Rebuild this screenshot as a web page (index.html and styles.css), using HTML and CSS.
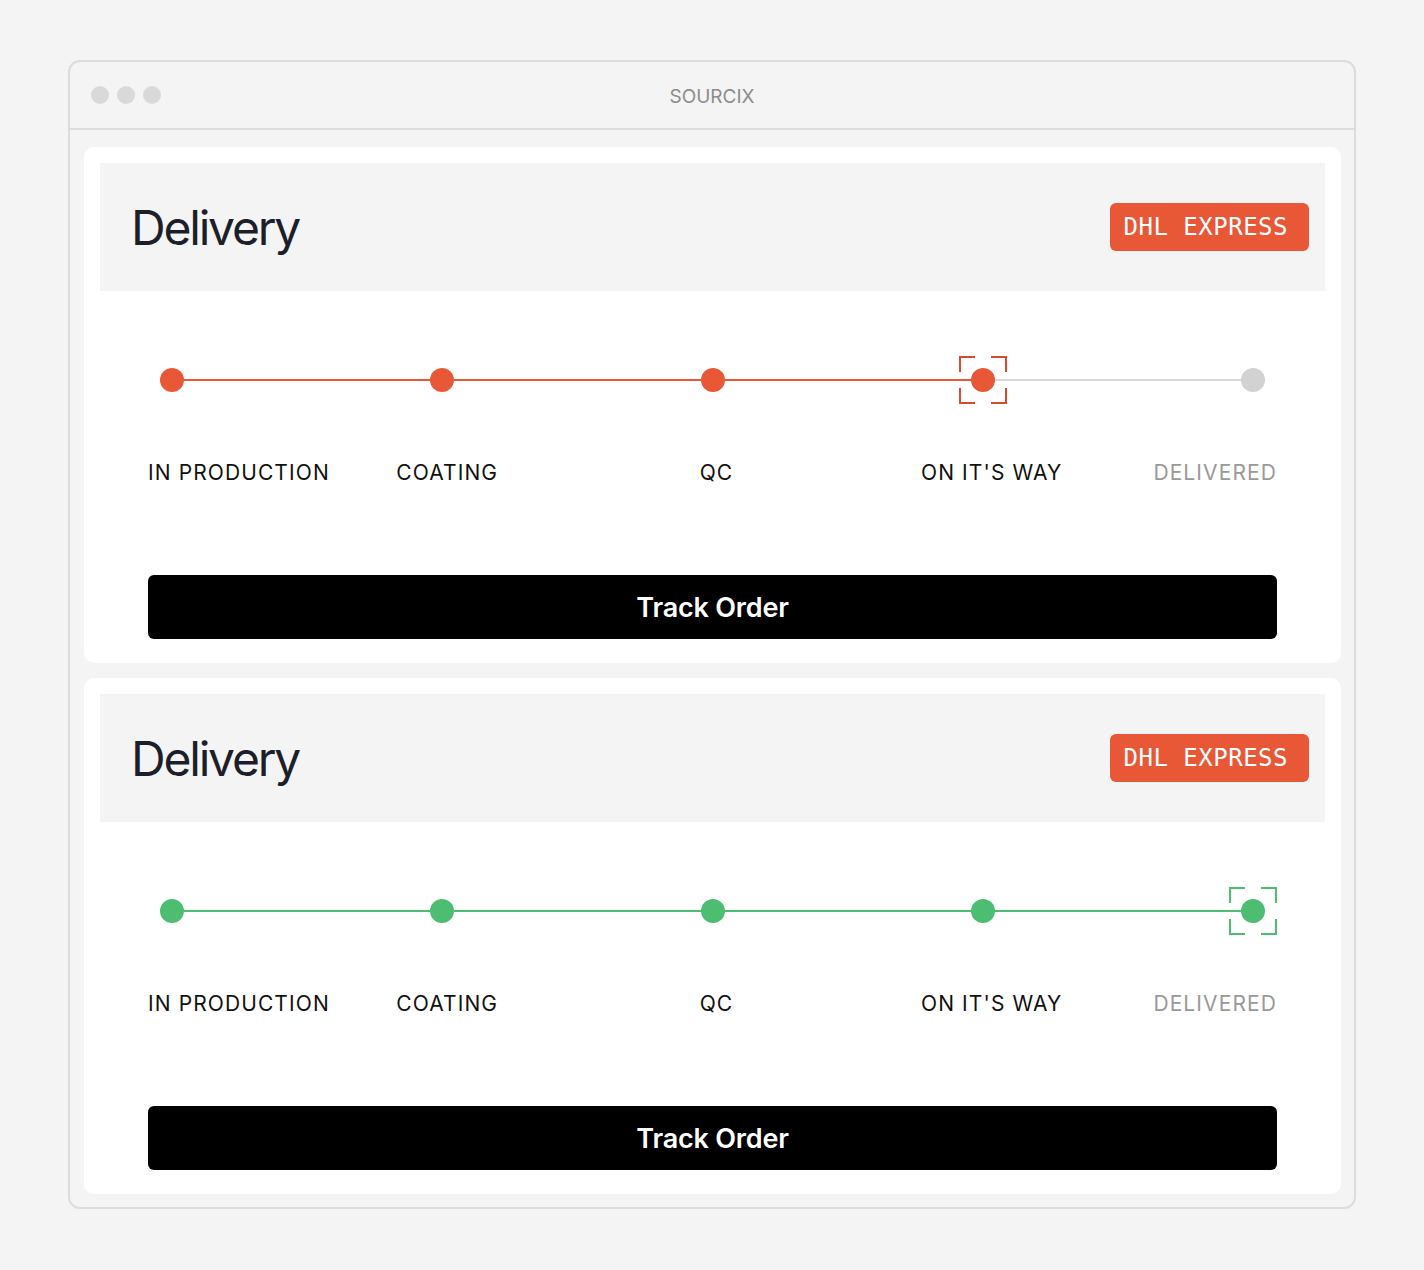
FILE: index.html
```html
<!DOCTYPE html>
<html lang="en">
<head>
  <meta charset="UTF-8">
  <meta name="viewport" content="width=device-width, initial-scale=1.0">
  <title>Sourcix - Delivery</title>
  <link rel="stylesheet" href="styles.css">
</head>
<body>
  <div class="window">
    <div class="window-bar">
      <div class="window-dots">
        <span></span><span></span><span></span>
      </div>
      <div class="window-title">SOURCIX</div>
      <div></div>
    </div>

    <div class="window-body">

      <!-- 订单 1：运输中 -->
      <section class="card">
        <div class="card-head">
          <h2>Delivery</h2>
          <span class="carrier">DHL EXPRESS</span>
        </div>
        <div class="timeline orange">
          <div class="track">
            <div class="stop done"><span class="dot"></span></div>
            <div class="seg done"></div>
            <div class="stop done"><span class="dot"></span></div>
            <div class="seg done"></div>
            <div class="stop done"><span class="dot"></span></div>
            <div class="seg done"></div>
            <div class="stop current">
              <svg class="frame" width="48" height="48" viewBox="0 0 48 48">
                <path d="M1 16V1h15M32 1h15v15M47 32v15H32M16 47H1V32" />
              </svg>
              <span class="dot"></span>
            </div>
            <div class="seg"></div>
            <div class="stop"><span class="dot"></span></div>
          </div>
          <div class="labels">
            <span>IN PRODUCTION</span>
            <span>COATING</span>
            <span>QC</span>
            <span>ON IT'S WAY</span>
            <span class="pending">DELIVERED</span>
          </div>
          <button class="track-btn">Track Order</button>
        </div>
      </section>

      <!-- 订单 2：已送达 -->
      <section class="card">
        <div class="card-head">
          <h2>Delivery</h2>
          <span class="carrier">DHL EXPRESS</span>
        </div>
        <div class="timeline green">
          <div class="track">
            <div class="stop done"><span class="dot"></span></div>
            <div class="seg done"></div>
            <div class="stop done"><span class="dot"></span></div>
            <div class="seg done"></div>
            <div class="stop done"><span class="dot"></span></div>
            <div class="seg done"></div>
            <div class="stop done"><span class="dot"></span></div>
            <div class="seg done"></div>
            <div class="stop current">
              <svg class="frame" width="48" height="48" viewBox="0 0 48 48">
                <path d="M1 16V1h15M32 1h15v15M47 32v15H32M16 47H1V32" />
              </svg>
              <span class="dot"></span>
            </div>
          </div>
          <div class="labels">
            <span>IN PRODUCTION</span>
            <span>COATING</span>
            <span>QC</span>
            <span>ON IT'S WAY</span>
            <span class="pending">DELIVERED</span>
          </div>
          <button class="track-btn">Track Order</button>
        </div>
      </section>

    </div>
  </div>
</body>
</html>
```

FILE: styles.css
```css
body {
  margin: 0;
  padding: 60px 0 62px;
  background-color: #f4f4f4;
  font-family: Inter, "Liberation Sans", Arial, sans-serif;
  color: #111;
}

.window {
  box-sizing: border-box;
  width: 1288px;
  margin: 0 auto;
  border: 2px solid #dcdcdc;
  border-radius: 12px;
  background-color: #f4f4f4;
}

.window-bar {
  display: grid;
  grid-template-columns: 1fr auto 1fr;
  align-items: center;
  height: 66px;
  padding: 0 21px;
  border-bottom: 2px solid #dcdcdc;
}

.window-dots {
  display: flex;
  gap: 8px;
}

.window-dots span {
  width: 18px;
  height: 18px;
  border-radius: 50%;
  background-color: #d9d9d9;
}

.window-title {
  font-size: 19px;
  color: #8c8c8c;
  padding-top: 2px;
}

.window-body {
  display: flex;
  flex-direction: column;
  gap: 15px;
  padding: 17px 13px 13px 14px;
}

.card {
  background-color: #fff;
  border-radius: 10px;
  padding: 16px;
}

.card-head {
  display: flex;
  justify-content: space-between;
  align-items: center;
  height: 128px;
  padding: 0 16px 0 31px;
  background-color: #f4f4f4;
}

.card-head h2 {
  margin: 0;
  font-size: 48px;
  font-weight: 400;
  letter-spacing: -2.2px;
  color: #1c1f2a;
}

.carrier {
  display: flex;
  align-items: center;
  height: 48px;
  padding: 0 21px 0 14px;
  border-radius: 6px;
  background-color: #e85736;
  color: #fff;
  font-family: "DejaVu Sans Mono", "Liberation Mono", monospace;
  font-size: 24px;
  letter-spacing: 0.5px;
}

/* 进度条 */
.timeline {
  padding: 65px 48px 8px;
  --on: #e85736;
  --frame: #d94a2c;
}

.timeline.green {
  --on: #4dbd72;
  --frame: #4dbd72;
}

.track {
  display: flex;
  align-items: center;
}

.stop {
  position: relative;
  z-index: 1;
  display: flex;
  align-items: center;
  justify-content: center;
  width: 48px;
  height: 48px;
  flex: none;
}

.dot {
  width: 24px;
  height: 24px;
  border-radius: 50%;
  background-color: #d2d2d2;
}

.stop.done .dot,
.stop.current .dot {
  background-color: var(--on);
}

.frame {
  position: absolute;
  top: 0;
  left: 0;
  fill: none;
  stroke: var(--frame);
  stroke-width: 2;
}

.seg {
  flex: 1;
  height: 2px;
  margin: 0 -12px;
  background-color: #d9d9d9;
}

.seg.done {
  background-color: var(--on);
}

.labels {
  display: grid;
  grid-template-columns: minmax(0, 159fr) repeat(3, minmax(0, 270fr)) minmax(0, 159fr);
  margin-top: 57px;
  font-size: 21px;
  letter-spacing: 1.1px;
  line-height: 24px;
  white-space: nowrap;
}

.labels span {
  justify-self: center;
}

.labels span:nth-child(2) {
  padding-left: 10px;
}

.labels span:nth-child(3) {
  padding-left: 8px;
}

.labels span:nth-child(4) {
  padding-left: 18px;
}

.labels span:first-child {
  justify-self: start;
}

.labels span:last-child {
  justify-self: end;
}

.labels .pending {
  color: #999;
}

.track-btn {
  display: block;
  width: 100%;
  height: 64px;
  margin-top: 90px;
  border: none;
  border-radius: 6px;
  background-color: #000;
  color: #fff;
  font-family: inherit;
  font-size: 27px;
  font-weight: 600;
  letter-spacing: -0.2px;
}
```
